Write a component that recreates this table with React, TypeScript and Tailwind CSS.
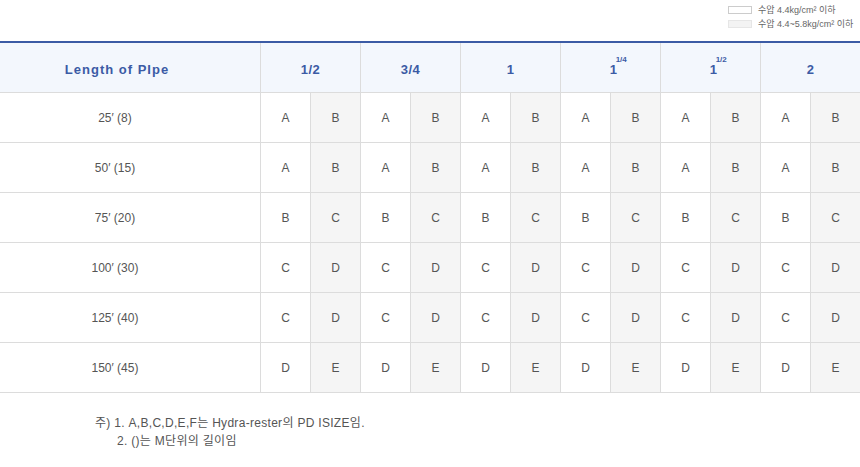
import React from 'react';

const sizes = [
  { main: '1/2' },
  { main: '3/4' },
  { main: '1' },
  { main: '1', sup: '1/4' },
  { main: '1', sup: '1/2' },
  { main: '2' },
];

const rows = [
  { label: "25′ (8)", pair: ['A', 'B'] },
  { label: "50′ (15)", pair: ['A', 'B'] },
  { label: "75′ (20)", pair: ['B', 'C'] },
  { label: "100′ (30)", pair: ['C', 'D'] },
  { label: "125′ (40)", pair: ['C', 'D'] },
  { label: "150′ (45)", pair: ['D', 'E'] },
];

const font = { fontFamily: '"Liberation Sans", "Noto Sans CJK KR", sans-serif' };

export default function App() {
  return (
    <div className="w-[860px] h-[467px] bg-white text-[#555]" style={font}>
      {/* legend */}
      <div className="h-[41px] pl-[728px] pt-[4px] flex flex-col gap-[2px] text-[9px] leading-[12px] text-[#666] whitespace-nowrap">
        <div className="flex items-center">
          <span className="w-[24px] h-[8px] border border-[#ccc] bg-white mr-[6px]" />
          <span>수압 4.4kg/cm² 이하</span>
        </div>
        <div className="flex items-center">
          <span className="w-[24px] h-[8px] border border-[#e6e6e6] bg-[#f3f3f3] mr-[6px]" />
          <span>수압 4.4~5.8kg/cm² 이하</span>
        </div>
      </div>

      {/* table */}
      <div className="border-t-2 border-[#3b5ba5]">
        <div className="grid grid-cols-[260px_repeat(6,100px)] h-[50px] bg-[#f3f7fd] border-b border-[#dcdcdc] text-[13px] font-bold text-[#3b5ba5]">
          <div className="flex items-center justify-center pt-[4px] pr-[26px] tracking-[1px]">Length of PIpe</div>
          {sizes.map((s, i) => (
            <div key={i} className="flex items-center justify-center pt-[4px] border-l border-[#dcdcdc] tracking-[0.5px]">
              {s.sup ? (
                <span className="relative pl-[6px]">
                  1
                  <span className="absolute left-[12px] -top-[4px] text-[8px] leading-none tracking-normal">{s.sup}</span>
                </span>
              ) : (
                <span>{s.main}</span>
              )}
            </div>
          ))}
        </div>

        {rows.map((r, i) => (
          <div key={i} className="grid grid-cols-[260px_repeat(12,50px)] h-[50px] border-b border-[#dcdcdc] text-[12px]">
            <div className="flex items-center justify-center pr-[30px]">{r.label}</div>
            {Array.from({ length: 12 }).map((_, j) => (
              <div
                key={j}
                className={
                  j % 2 === 0
                    ? 'flex items-center justify-center border-l border-[#dcdcdc] bg-white'
                    : 'flex items-center justify-center border-l border-[#dcdcdc] bg-[#f5f5f5]'
                }
              >
                {r.pair[j % 2]}
              </div>
            ))}
          </div>
        ))}
      </div>

      {/* notes */}
      <div className="pl-[95px] pt-[21px] text-[12px] leading-[18px] tracking-[0.3px] text-[#555]">
        <div>주) 1. A,B,C,D,E,F는 Hydra-rester의 PD ISIZE임.</div>
        <div className="pl-[22px]">2. ()는 M단위의 길이임</div>
      </div>
    </div>
  );
}
